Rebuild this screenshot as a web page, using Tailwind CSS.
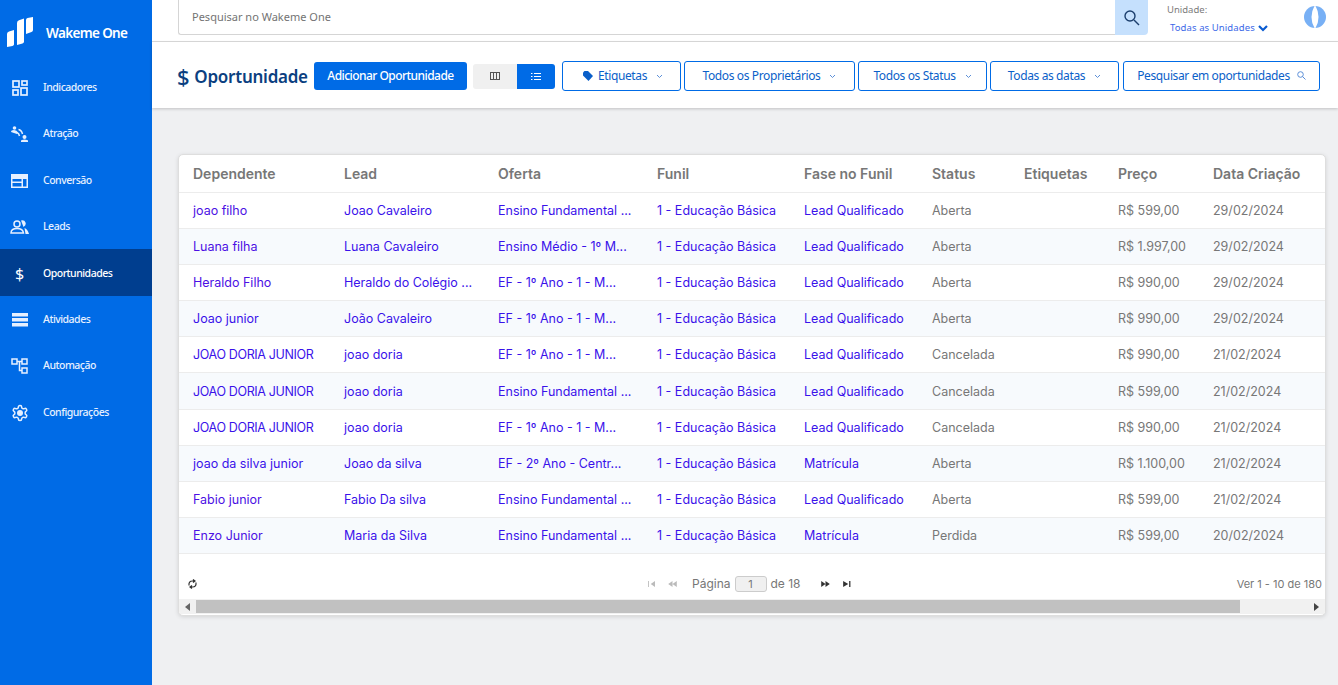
<!DOCTYPE html>
<html lang="pt-BR">
<head>
  <meta charset="UTF-8" />
  <title>Wakeme One - Oportunidades</title>
  <script src="https://cdn.jsdelivr.net/npm/@tailwindcss/browser@4"></script>
</head>
<body class="h-[685px] w-[1338px] overflow-hidden bg-[#eff0f2] font-['Noto_Sans',sans-serif]">
  <div class="flex h-full">
    <!-- menu lateral -->
    <aside class="w-[152px] shrink-0 bg-[#006be6] text-white">
      <div class="flex h-[63.6px] items-start pl-[7px] pt-[17px]">
        <svg width="27" height="30" viewBox="0 0 27 30" fill="#fff"><path d="M0 17q0-2 2-2.600l5-1.400v14.500q0 1-1.500 1.400L0 30z"/><path d="M10 6q0-2 2-2.800L17 1.500v23q0 1.500-1.500 2L10 28z"/><path d="M19 3q0-1.500 1.500-2L26 0v13q0 1.500-1.500 2L19 17z"/></svg>
        <span class="ml-[12px] mt-[6px] text-[13.5px] font-semibold leading-5 tracking-[-0.65px]">Wakeme One</span>
      </div>
      <nav class="text-[10.5px] font-medium tracking-[-0.5px] text-[#e6f0ff]">
        <a class="flex h-[46.4px] items-center pt-[2px]"><span class="mr-[4px] flex w-[39px] justify-center"><svg width="16" height="16" viewBox="0 0 16 16" fill="none" stroke="currentColor" stroke-width="1.700"><rect x="1" y="1" width="6" height="6"/><rect x="10" y="1" width="5" height="4"/><rect x="1" y="10" width="5" height="5"/><rect x="9" y="8" width="6" height="7"/></svg></span>Indicadores</a>
        <a class="flex h-[46.4px] items-center pt-[2px]"><span class="mr-[4px] flex w-[39px] justify-center"><svg width="17" height="16" viewBox="0 0 17 16" fill="currentColor"><circle cx="3.500" cy="2" r="1.800"/><path d="M0 6q0-2 3-2t4 2.500l-1 1.500z"/><circle cx="13.500" cy="11" r="2"/><path d="M10 16v-1q0-1.500 3.500-1.500T17 15v1z"/><path d="M7.500 3.500q3 .5 4 4.500M6 6.500q2 .7 2.500 3.500" fill="none" stroke="currentColor" stroke-width="1.500"/></svg></span>Atração</a>
        <a class="flex h-[46.4px] items-center pt-[2px]"><span class="mr-[4px] flex w-[39px] justify-center"><svg width="17" height="14" viewBox="0 0 17 14" fill="currentColor"><path fill-rule="evenodd" d="M0 0h17v14H0zM1.500 5v2.500h9V5zm0 4v3.500h9V9zM12 5v7.500h3.500V5z"/></svg></span>Conversão</a>
        <a class="flex h-[46.4px] items-center pt-[2px]"><span class="mr-[4px] flex w-[39px] justify-center"><svg width="19" height="14" viewBox="0 0 19 14" fill="none" stroke="currentColor" stroke-width="1.500"><circle cx="7" cy="4" r="3"/><path d="M1 13q0-4.500 6-4.500T13.500 13z"/><path d="M11 .5q3.500-.8 4.500 2t-2 4.500M14.500 8q3 1 4.500 6h-3.500" fill="currentColor" stroke="none"/></svg></span>Leads</a>
        <a class="flex h-[46.4px] items-center bg-[#003e8f] pt-[3px] text-white"><span class="mr-[4px] flex w-[39px] justify-center text-[16px] font-normal leading-none tracking-normal">$</span>Oportunidades</a>
        <a class="flex h-[46.4px] items-center pt-[2px]"><span class="mr-[4px] flex w-[39px] justify-center"><svg width="16" height="14" viewBox="0 0 16 14" fill="currentColor"><rect width="16" height="3.500"/><rect y="5" width="16" height="3.500"/><rect y="10" width="16" height="3.500"/></svg></span>Atividades</a>
        <a class="flex h-[46.4px] items-center pt-[2px]"><span class="mr-[4px] flex w-[39px] justify-center"><svg width="17" height="16" viewBox="0 0 17 16" fill="none" stroke="currentColor" stroke-width="1.500"><rect x="1" y="1" width="5" height="5"/><rect x="11" y="1" width="5" height="5"/><rect x="11" y="10" width="5" height="5"/><path d="M6 3.500h5M8.500 3.500v9H11"/></svg></span>Automação</a>
        <a class="flex h-[46.4px] items-center pt-[2px]"><span class="mr-[4px] flex w-[39px] justify-center"><svg width="18" height="18" viewBox="0 0 24 24" fill="none" stroke="currentColor" stroke-width="2"><path d="M12.220 2h-.44a2 2 0 0 0-2 2v.18a2 2 0 0 1-1 1.730l-.43.25a2 2 0 0 1-2 0l-.15-.08a2 2 0 0 0-2.730.73l-.22.38a2 2 0 0 0 .73 2.730l.15.1a2 2 0 0 1 1 1.720v.51a2 2 0 0 1-1 1.740l-.15.09a2 2 0 0 0-.73 2.730l.22.38a2 2 0 0 0 2.730.73l.15-.08a2 2 0 0 1 2 0l.43.25a2 2 0 0 1 1 1.730V20a2 2 0 0 0 2 2h.44a2 2 0 0 0 2-2v-.18a2 2 0 0 1 1-1.730l.43-.25a2 2 0 0 1 2 0l.15.08a2 2 0 0 0 2.730-.73l.22-.39a2 2 0 0 0-.73-2.730l-.15-.08a2 2 0 0 1-1-1.740v-.5a2 2 0 0 1 1-1.740l.15-.09a2 2 0 0 0 .73-2.730l-.22-.38a2 2 0 0 0-2.730-.73l-.15.08a2 2 0 0 1-2 0l-.43-.25a2 2 0 0 1-1-1.730V4a2 2 0 0 0-2-2z"/><circle cx="12" cy="12" r="3" fill="currentColor"/></svg></span>Configurações</a>
      </nav>
    </aside>

    <div class="min-w-0 flex-1">
      <!-- barra superior -->
      <header class="flex h-[42px] border-b border-[#dcdcdc] bg-white pl-[26px]">
        <div class="flex h-[35px] w-[937px] items-center rounded-bl-[3px] border-b border-l border-[#d5d5d5] pl-[13px] text-[11px] text-[#737373]">Pesquisar no Wakeme One</div>
        <div class="flex h-[35px] w-[33px] items-center justify-center rounded-br-[4px] bg-[#c5e0fd]">
          <svg width="17" height="17" viewBox="0 0 17 17" fill="none" stroke="#1c3f6e" stroke-width="1.400"><circle cx="7" cy="7" r="5"/><path d="M11 11l5 5"/></svg>
        </div>
        <div class="ml-[19px] w-[137px] pt-[4px]">
          <p class="text-[9.5px] leading-[12px] text-[#7b7b7b]">Unidade:</p>
          <p class="ml-[3px] mt-[5px] flex items-center text-[9.5px] leading-[14px] tracking-[0.1px] text-[#3b68e8]">Todas as Unidades
            <svg class="ml-[3px]" width="10" height="7" viewBox="0 0 10 7" fill="none" stroke="#0a5bd0" stroke-width="2.200"><path d="M1 1l4 4 4-4"/></svg>
          </p>
        </div>
        <svg class="mt-[6px]" width="22" height="22" viewBox="0 0 22 22"><circle cx="11" cy="11" r="11" fill="#78b0f5"/><path d="M10.500 0q-3 5-3 11t3 11h1q3-5 3-11t-3-11z" fill="#fff"/></svg>
      </header>

      <!-- titulo e filtros -->
      <section class="flex h-[66px] items-center bg-white pl-[25px] pt-[2px] shadow-[0_1px_3px_rgba(0,0,0,0.2)]">
        <h1 class="flex w-[137px] items-center whitespace-nowrap text-[17px] font-semibold leading-none tracking-[-0.25px] text-[#0b3f80]"><span class="mr-[5px] text-[22px] font-medium">$</span>Oportunidade</h1>
        <button class="h-[28px] w-[153px] rounded-[3px] bg-[#006be6] text-[12px] font-medium tracking-[-0.55px] text-white">Adicionar Oportunidade</button>
        <div class="ml-[6px] flex h-[25px] w-[82px] overflow-hidden rounded-[3px]">
          <span class="flex w-[44px] items-center justify-center bg-[#f0f0f0]"><svg width="10" height="8" viewBox="0 0 10 8" fill="none" stroke="#555" stroke-width="1"><rect x=".5" y=".5" width="9" height="7"/><path d="M3.500 0v8M6.500 0v8"/></svg></span>
          <span class="flex flex-1 items-center justify-center bg-[#006be6]"><svg width="10" height="7" viewBox="0 0 10 7" fill="none" stroke="#fff" stroke-width="1.100"><path d="M0 .5h1.500M3 .5h7M0 3.500h1.500M3 3.500h7M0 6.500h1.500M3 6.500h7"/></svg></span>
        </div>
        <div class="ml-[7px] flex text-[12px] tracking-[-0.38px] text-[#0a5fc9]">
          <button class="flex h-[30px] w-[119px] items-center justify-center rounded-[3px] border border-[#006be6] pl-[3px]"><svg class="mr-[5px]" width="10" height="10" viewBox="0 0 10 10" fill="#0a5fc9"><path d="M0 1.500 1.500 0H5l5 5-4.500 5L0 4.500z"/></svg>Etiquetas<svg class="ml-[9px]" width="7" height="5" viewBox="0 0 7 5" fill="none" stroke="#5b8fd8"><path d="M1 1l2.500 2.500L6 1"/></svg></button>
          <button class="ml-[3px] flex h-[30px] w-[171px] items-center justify-center rounded-[3px] border border-[#006be6]">Todos os Proprietários<svg class="ml-[9px]" width="7" height="5" viewBox="0 0 7 5" fill="none" stroke="#5b8fd8"><path d="M1 1l2.500 2.500L6 1"/></svg></button>
          <button class="ml-[3px] flex h-[30px] w-[129px] items-center justify-center rounded-[3px] border border-[#006be6]">Todos os Status<svg class="ml-[9px]" width="7" height="5" viewBox="0 0 7 5" fill="none" stroke="#5b8fd8"><path d="M1 1l2.500 2.500L6 1"/></svg></button>
          <button class="ml-[3px] flex h-[30px] w-[129px] items-center justify-center rounded-[3px] border border-[#006be6]">Todas as datas<svg class="ml-[9px]" width="7" height="5" viewBox="0 0 7 5" fill="none" stroke="#5b8fd8"><path d="M1 1l2.500 2.500L6 1"/></svg></button>
          <button class="ml-[4px] flex h-[30px] w-[197px] items-center justify-center rounded-[3px] border border-[#006be6]">Pesquisar em oportunidades<svg class="ml-[7px] -mt-[2px]" width="9" height="9" viewBox="0 0 9 9" fill="none" stroke="#5b8fd8"><circle cx="3.500" cy="3.500" r="2.800"/><path d="M5.500 5.500 8.500 8.500"/></svg></button>
        </div>
      </section>

      <!-- tabela -->
      <div class="ml-[26px] mt-[46px] h-[462px] w-[1148px] overflow-hidden rounded-[5px] border border-[#dedede] bg-white font-['Inter',sans-serif] shadow-[0_1px_4px_rgba(0,0,0,0.12)]">
        <table class="w-full table-fixed border-collapse text-[12.5px] text-[#777]">
          <thead class="text-[14px] text-[#777]">
            <tr class="h-[37px] border-b border-[#ececec] text-left">
              <th class="w-[151px] pl-[14px] font-semibold">Dependente</th>
              <th class="w-[154px] pl-[14px] font-semibold">Lead</th>
              <th class="w-[159px] pl-[14px] font-semibold">Oferta</th>
              <th class="w-[147px] pl-[14px] font-semibold">Funil</th>
              <th class="w-[128px] pl-[14px] font-semibold">Fase no Funil</th>
              <th class="w-[92px] pl-[14px] font-semibold">Status</th>
              <th class="w-[94px] pl-[14px] font-semibold">Etiquetas</th>
              <th class="w-[95px] pl-[14px] font-semibold">Preço</th>
              <th class="pl-[14px] font-semibold">Data Criação</th>
            </tr>
          </thead>
          <tbody id="linhas"></tbody>
        </table>

        <div class="flex h-[45px] items-end pb-[6px] text-[12px]">
          <svg class="ml-[9px] mb-[4px]" width="9" height="10" viewBox="0 0 9 10" fill="none" stroke="#333" stroke-width="1.200"><path d="M1 6.500Q.5 2 4.500 2H6M8 3.500Q8.500 8 4.500 8H3M5 .5 7 2 5 3.500M4 6.500 2 8l2 1.500"/></svg>
          <div class="ml-[451px] flex items-center text-[#777]">
            <svg width="8" height="6" viewBox="0 0 9 7" fill="#bbb"><path d="M0 0h1v7H0zM8 0v7L3 3.500z"/></svg>
            <svg class="ml-[12px]" width="9" height="6" viewBox="0 0 10 7" fill="#bbb"><path d="M5 0v7L0 3.500zM10 0v7L5 3.500z"/></svg>
            <span class="ml-[15px]">Página</span>
            <span class="mx-[4px] flex h-[16px] w-[32px] items-center justify-center rounded-[3px] border border-[#ccc] bg-[#f0f0f0] text-[11px]">1</span>
            <span>de 18</span>
            <svg class="ml-[20px]" width="9" height="6" viewBox="0 0 10 7" fill="#333"><path d="M0 0v7l5-3.500zM5 0v7l5-3.500z"/></svg>
            <svg class="ml-[13px]" width="8" height="6" viewBox="0 0 9 7" fill="#333"><path d="M0 0v7l6-3.500zM7 0h1.500v7H7z"/></svg>
          </div>
          <span class="ml-auto mb-[1px] mr-[3px] text-[11px] text-[#777]">Ver 1 - 10 de 180</span>
        </div>

        <!-- barra de rolagem -->
        <div class="flex h-[15px] items-center bg-[#f1f1f1]">
          <svg class="ml-[6px]" width="5" height="8" viewBox="0 0 5 8" fill="#666"><path d="M5 0v8L0 4z"/></svg>
          <div class="ml-[6px] h-[13px] w-[1044px] bg-[#c1c1c1]"></div>
          <svg class="ml-auto mr-[6px]" width="5" height="8" viewBox="0 0 5 8" fill="#444"><path d="M0 0v8l5-4z"/></svg>
        </div>
      </div>
    </div>
  </div>

  <script>
    const azul = "text-[#3a12ea]";
    const roxo = "text-[#4c10e4]";
    const caixaAlta = "text-[#3a12ea] tracking-[-0.35px]";
    const linhas = [
      ["joao filho", roxo, "Joao Cavaleiro", "Ensino Fundamental ...", "Lead Qualificado", "Aberta", "R$ 599,00", "29/02/2024"],
      ["Luana filha", roxo, "Luana Cavaleiro", "Ensino Médio - 1º M...", "Lead Qualificado", "Aberta", "R$ 1.997,00", "29/02/2024"],
      ["Heraldo Filho", roxo, "Heraldo do Colégio ...", "EF - 1º Ano - 1 - M...", "Lead Qualificado", "Aberta", "R$ 990,00", "29/02/2024"],
      ["Joao junior", azul, "João Cavaleiro", "EF - 1º Ano - 1 - M...", "Lead Qualificado", "Aberta", "R$ 990,00", "29/02/2024"],
      ["JOAO DORIA JUNIOR", caixaAlta, "joao doria", "EF - 1º Ano - 1 - M...", "Lead Qualificado", "Cancelada", "R$ 990,00", "21/02/2024"],
      ["JOAO DORIA JUNIOR", caixaAlta, "joao doria", "Ensino Fundamental ...", "Lead Qualificado", "Cancelada", "R$ 599,00", "21/02/2024"],
      ["JOAO DORIA JUNIOR", caixaAlta, "joao doria", "EF - 1º Ano - 1 - M...", "Lead Qualificado", "Cancelada", "R$ 990,00", "21/02/2024"],
      ["joao da silva junior", azul, "Joao da silva", "EF - 2º Ano - Centr...", "Matrícula", "Aberta", "R$ 1.100,00", "21/02/2024"],
      ["Fabio junior", roxo, "Fabio Da silva", "Ensino Fundamental ...", "Lead Qualificado", "Aberta", "R$ 599,00", "21/02/2024"],
      ["Enzo Junior", roxo, "Maria da Silva", "Ensino Fundamental ...", "Matrícula", "Perdida", "R$ 599,00", "20/02/2024"],
    ];
    const corpo = document.getElementById("linhas");
    linhas.forEach((l, i) => {
      const tr = document.createElement("tr");
      tr.className = "h-[36.2px] border-b border-[#ececec] " + (i % 2 ? "bg-[#f7fafd]" : "bg-white");
      tr.innerHTML = `
        <td class="pl-[14px] pt-[2px] whitespace-nowrap ${l[1]}">${l[0]}</td>
        <td class="pl-[14px] pt-[2px] whitespace-nowrap text-[#3a12ea]">${l[2]}</td>
        <td class="pl-[14px] pt-[2px] whitespace-nowrap text-[#3a12ea]">${l[3]}</td>
        <td class="pl-[14px] pt-[2px] whitespace-nowrap text-[#3a12ea]">1 - Educação Básica</td>
        <td class="pl-[14px] pt-[2px] whitespace-nowrap text-[#3a12ea]">${l[4]}</td>
        <td class="pl-[14px] pt-[2px] whitespace-nowrap">${l[5]}</td>
        <td class="pl-[14px] pt-[2px]"></td>
        <td class="pl-[14px] pt-[2px] whitespace-nowrap">${l[6]}</td>
        <td class="pl-[14px] pt-[2px] whitespace-nowrap">${l[7]}</td>`;
      corpo.appendChild(tr);
    });
  </script>
</body>
</html>
